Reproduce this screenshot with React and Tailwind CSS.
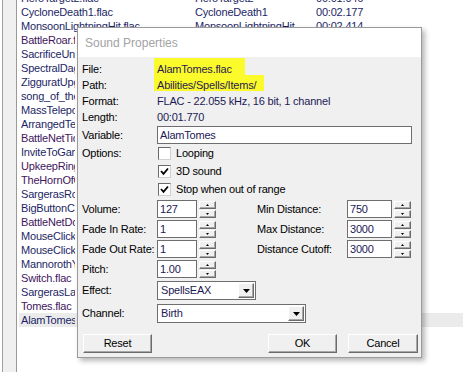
import React from "react";

const F = "font-['Liberation_Sans',Arial,sans-serif]";

const list = [
  ["HeroTarget2.flac", "HeroTarget2", "00:01.046", 0],
  ["CycloneDeath1.flac", "CycloneDeath1", "00:02.177", 0],
  ["MonsoonLightningHit.flac", "MonsoonLightningHit", "00:02.414", 0],
  ["BattleRoar.flac", "", "", 1],
  ["SacrificeUnit.flac", "", "", 0],
  ["SpectralDagger.flac", "", "", 0],
  ["ZigguratUpgrade.flac", "", "", 0],
  ["song_of_the_elves.flac", "", "", 0],
  ["MassTeleport.flac", "", "", 0],
  ["ArrangedTeam.flac", "", "", 0],
  ["BattleNetTick.flac", "", "", 1],
  ["InviteToGame.flac", "", "", 0],
  ["UpkeepRing.flac", "", "", 1],
  ["TheHornOfCenarius.flac", "", "", 1],
  ["SargerasRoar.flac", "", "", 0],
  ["BigButtonClick.flac", "", "", 0],
  ["BattleNetDoor.flac", "", "", 1],
  ["MouseClick1.flac", "", "", 0],
  ["MouseClick2.flac", "", "", 0],
  ["MannorothYes.flac", "", "", 0],
  ["Switch.flac", "", "", 1],
  ["SargerasLaugh.flac", "", "", 0],
  ["Tomes.flac", "", "", 1],
  ["AlamTomes.flac", "", "", 0],
];

const Tri = ({ up, w = 5, h = 3 }) => (
  <svg width={w} height={h} viewBox={`0 0 ${w} ${h}`} className="block">
    <polygon
      points={up ? `0,${h} ${w},${h} ${w / 2},0` : `0,0 ${w},0 ${w / 2},${h}`}
      fill="#000"
    />
  </svg>
);

const Bevel =
  "bg-[#f0f0f0] border-t border-l border-t-white border-l-white border-b border-r border-b-[#6b6b6b] border-r-[#6b6b6b] shadow-[inset_-1px_-1px_0_#a8a8a8]";

const Spin = () => (
  <div className="ml-[2px] flex flex-col gap-[1px] w-[17px] h-[17px]">
    <div className={`${Bevel} h-[8px] flex items-center justify-center`}>
      <Tri up w={3} h={2} />
    </div>
    <div className={`${Bevel} h-[8px] flex items-center justify-center`}>
      <Tri w={3} h={2} />
    </div>
  </div>
);

const Input = ({ w, value }) => (
  <div
    className={`h-[18px] bg-white border border-[#6e6e6e] flex items-center pl-[2px] text-[#1c1a55]`}
    style={{ width: w }}
  >
    {value}
  </div>
);

const Label = ({ children, w = "w-[75px]" }) => (
  <div className={`${w} shrink-0 text-black`}>{children}</div>
);

const Check = ({ checked }) => (
  <div className="ml-[1px] w-[13px] h-[13px] bg-white border border-t-[#6a6a6a] border-l-[#6a6a6a] border-b-[#d0d0d0] border-r-[#d0d0d0] flex items-center justify-center">
    {checked && (
      <svg width="9" height="9" viewBox="0 0 9 9" className="block">
        <polyline points="1,4 3.5,6.8 8,1.5" fill="none" stroke="#000" strokeWidth="1.8" />
      </svg>
    )}
  </div>
);

const Select = ({ w, value }) => (
  <div
    className="h-[19px] bg-white border border-[#6e6e6e] flex items-center pl-[3px] pr-[1px] text-[#1c1a55]"
    style={{ width: w }}
  >
    <span className="flex-1">{value}</span>
    <div className={`${Bevel} w-[16px] h-[15px] flex items-center justify-center`}>
      <Tri w={7} h={4} />
    </div>
  </div>
);

const Btn = ({ children, w = 69, cls = "" }) => (
  <div
    className={`${Bevel} h-[19px] flex items-center justify-center text-black ${cls}`}
    style={{ width: w }}
  >
    {children}
  </div>
);

export default function App() {
  return (
    <div className={`${F} relative w-[463px] h-[372px] overflow-hidden bg-white text-[11px] tracking-[-0.2px] leading-none`}>
      {/* background list */}
      <div className="flex h-full">
        <div className="w-[17px] shrink-0 flex">
          <div className="ml-[2px] w-[15px] h-full bg-[#f0f0f0] border-l border-r border-l-[#a0a0a0] border-r-[#9a9a9a]" />
        </div>
        <div className="flex-1 flex flex-col mt-[-9px]">
          {list.map(([a, b, c, p], i) => (
            <div
              key={i}
              className={`ml-[2px] h-[14px] flex items-center ${i === list.length - 1 ? "bg-[#ebebeb]" : ""} ${p ? "text-[#42165e]" : "text-[#1d1f66]"}`}
            >
              {i < 3 ? (
                <>
                  <div className="w-[176px] pl-[2px] whitespace-nowrap overflow-hidden">{a}</div>
                  <div className="w-[121px] whitespace-nowrap">{b}</div>
                  <div className="whitespace-nowrap">{c}</div>
                </>
              ) : (
                <div className="w-[56px] pl-[2px] whitespace-nowrap overflow-hidden">{a}</div>
              )}
            </div>
          ))}
        </div>
      </div>

      {/* dialog */}
      <div className="absolute left-[77px] top-[27px] w-[345px] h-[331px] border border-[#9a9a9a] shadow-[3px_3px_5px_rgba(0,0,0,0.28)] flex flex-col">
        <div className="h-[29px] bg-white flex items-center pl-[7px] text-[12px] tracking-normal text-[#a3a3a3]">
          Sound Properties
        </div>
        <div className="relative flex-1 bg-[#f0f0f0] flex flex-col pl-[4px] pt-[4px]">
          {/* highlighter marks */}
          <div className="absolute left-[76px] top-[1px] w-[91px] h-[17px] bg-[#fbfb2c]" />
          <div className="absolute left-[76px] top-[18px] w-[110px] h-[16px] bg-[#fbfb2c]" />

          <div className="relative h-[16px] flex items-center">
            <Label>File:</Label>
            <span className="text-[#2a1a50]">AlamTomes.flac</span>
          </div>
          <div className="relative h-[16px] flex items-center">
            <Label>Path:</Label>
            <span className="text-[#2a1a50]">Abilities/Spells/Items/</span>
          </div>
          <div className="h-[16px] flex items-center">
            <Label>Format:</Label>
            <span className="text-[#1c1a55]">FLAC - 22.055 kHz, 16 bit, 1 channel</span>
          </div>
          <div className="h-[16px] flex items-center">
            <Label>Length:</Label>
            <span className="text-[#1c1a55]">00:01.770</span>
          </div>

          <div className="mt-[1px] h-[18px] flex items-center">
            <Label>Variable:</Label>
            <Input w={255} value="AlamTomes" />
          </div>

          <div className="h-[18px] flex items-center">
            <Label>Options:</Label>
            <Check />
            <span className="ml-[5px] text-black">Looping</span>
          </div>
          <div className="h-[18px] flex items-center">
            <Label></Label>
            <Check checked />
            <span className="ml-[5px] text-black">3D sound</span>
          </div>
          <div className="h-[18px] flex items-center">
            <Label></Label>
            <Check checked />
            <span className="ml-[5px] text-black">Stop when out of range</span>
          </div>

          {[
            ["Volume:", "127", "Min Distance:", "750"],
            ["Fade In Rate:", "1", "Max Distance:", "3000"],
            ["Fade Out Rate:", "1", "Distance Cutoff:", "3000"],
            ["Pitch:", "1.00", null, null],
          ].map(([l, v, rl, rv], i) => (
            <div key={i} className="mt-[2px] h-[18px] flex items-center">
              <Label>{l}</Label>
              <Input w={40} value={v} />
              <Spin />
              {rl && (
                <>
                  <div className="ml-[41px] w-[90px] shrink-0 text-black">{rl}</div>
                  <Input w={45} value={rv} />
                  <Spin />
                </>
              )}
            </div>
          ))}

          <div className="mt-[3px] h-[19px] flex items-center">
            <Label>Effect:</Label>
            <Select w={99} value="SpellsEAX" />
          </div>
          <div className="mt-[4px] h-[19px] flex items-center">
            <Label>Channel:</Label>
            <Select w={149} value="Birth" />
          </div>

          <div className="mt-[11px] flex items-center pr-[3px]">
            <Btn cls="ml-[1px]">Reset</Btn>
            <Btn cls="ml-auto">OK</Btn>
            <Btn w={70} cls="ml-[11px]">Cancel</Btn>
          </div>
        </div>
      </div>
    </div>
  );
}
